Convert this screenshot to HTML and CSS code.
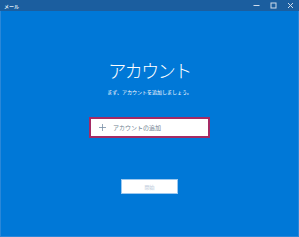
FILE: index.html
```html
<!DOCTYPE html>
<html lang="ja">
<head>
<meta charset="utf-8">
<link rel="stylesheet" href="styles.css">
</head>
<body>
<div class="window">
  <div class="titlebar">
    <span class="app-name">メール</span>
    <div class="controls">
      <svg class="ctl" width="7" height="7" viewBox="0 0 7 7"><path d="M0.5 3.5h6" stroke="#cfdcec" stroke-width="1"/></svg>
      <svg class="ctl" width="7" height="7" viewBox="0 0 7 7"><rect x="1" y="1" width="5" height="5" fill="none" stroke="#cfdcec" stroke-width="1"/></svg>
      <svg class="ctl" width="7" height="7" viewBox="0 0 7 7"><path d="M1 1l5 5M6 1l-5 5" stroke="#cfdcec" stroke-width="1"/></svg>
    </div>
  </div>
  <div class="main">
    <h1 class="heading">アカウント</h1>
    <p class="sub">まず、アカウントを追加しましょう。</p>
    <div class="add-btn">
      <svg class="plus" width="7" height="7" viewBox="0 0 7 7"><path d="M3.5 0v7M0 3.5h7" stroke="#7a8fa6" stroke-width="0.8"/></svg>
      <span class="add-label">アカウントの追加</span>
    </div>
    <div class="start-btn"><span>開始</span></div>
  </div>
</div>
</body>
</html>
```
FILE: styles.css
```css
html, body {
  margin: 0;
  padding: 0;
}
body {
  width: 299px;
  height: 237px;
  overflow: hidden;
  font-family: "Noto Sans CJK JP", "Noto Sans", sans-serif;
}
.window {
  width: 299px;
  height: 237px;
  box-sizing: border-box;
  display: flex;
  flex-direction: column;
  background: #0078d7;
  border: 1px solid #2a87d8;
  border-top: none;
}
.titlebar {
  height: 11px;
  flex: none;
  background: #1b5e9f;
  display: flex;
  align-items: center;
  justify-content: space-between;
  margin: 0 -1px;
}
.app-name {
  font-size: 5px;
  font-weight: 700;
  color: #dfe8f3;
  margin-left: 4px;
  line-height: 1;
}
.controls {
  display: flex;
  align-items: center;
  gap: 10px;
  margin-right: 5px;
}
.ctl {
  display: block;
}
.main {
  flex: 1;
  display: flex;
  flex-direction: column;
  align-items: center;
}
.heading {
  margin: 47px 0 0 0;
  font-size: 18px;
  font-weight: 300;
  color: #ffffff;
  line-height: 24px;
  letter-spacing: -1.5px;
}
.sub {
  margin: 6px 0 0 0;
  font-size: 5px;
  color: #ffffff;
  line-height: 7px;
}
.add-btn {
  margin-top: 22px;
  width: 121px;
  height: 21px;
  box-sizing: border-box;
  background: #ffffff;
  border: 2px solid #a52a64;
  display: flex;
  align-items: center;
  padding-left: 8px;
  gap: 7px;
}
.plus {
  display: block;
}
.add-label {
  font-size: 6px;
  color: #6f7f90;
  line-height: 1;
}
.start-btn {
  margin-top: 41px;
  width: 57px;
  height: 15px;
  box-sizing: border-box;
  background: #ffffff;
  border: 1px solid #9cc8ef;
  display: flex;
  align-items: center;
  justify-content: center;
}
.start-btn span {
  font-size: 5px;
  color: #b7c7d8;
  line-height: 1;
}
```
